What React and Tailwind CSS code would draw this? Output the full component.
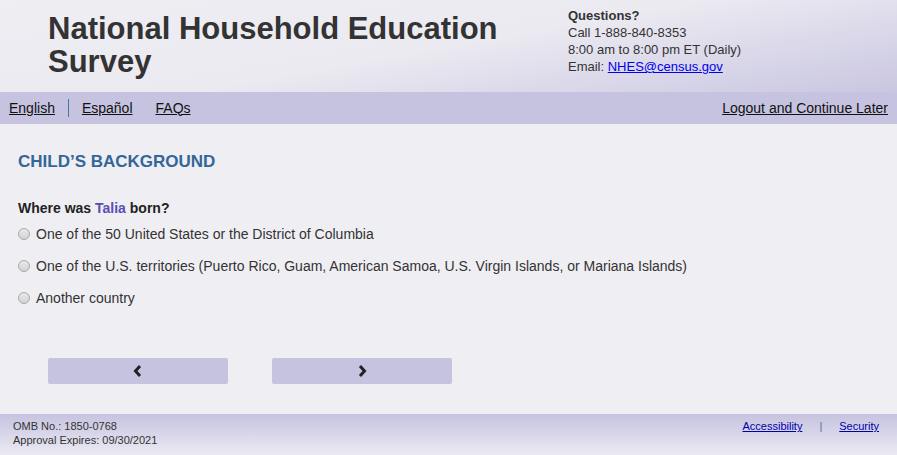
import React from "react";

function Radio({ label }) {
  return (
    <label className="flex h-[32px] items-center gap-[6px]">
      <span className="h-[12px] w-[12px] shrink-0 rounded-full border border-[#a9a9a9] bg-gradient-to-b from-[#e8e8e8] to-[#d4d4d4]" />
      <span>{label}</span>
    </label>
  );
}

export default function App() {
  return (
    <div className="flex min-h-[455px] w-full flex-col bg-[#efeef3] text-[#333] font-['Liberation_Sans',Arial,sans-serif]">
      {/* header */}
      <header className="flex h-[92px] bg-[linear-gradient(170deg,#efeef3_0%,#ebeaf1_50%,#c9c6e1_100%)]">
        <h1 className="w-[520px] pl-[48px] pt-[12px] text-[31px] font-bold leading-[33px] text-[#333]">
          National Household Education Survey
        </h1>
        <div className="pl-[48px] pt-[7px] text-[13px] leading-[17px] text-[#333]">
          <p className="font-bold">Questions?</p>
          <p>Call 1-888-840-8353</p>
          <p>8:00 am to 8:00 pm ET (Daily)</p>
          <p>
            Email: <a className="text-[#0000ee] underline">NHES@census.gov</a>
          </p>
        </div>
      </header>

      {/* nav */}
      <nav className="flex h-[32px] items-center justify-between bg-[#c6c3e0] px-[9px] text-[14px] text-[#111]">
        <div className="flex items-center">
          <a className="underline">English</a>
          <span className="mx-[13px] h-[18px] w-px bg-[#4a6fa5]" />
          <a className="underline">Español</a>
          <a className="ml-[23px] underline">FAQs</a>
        </div>
        <a className="underline">Logout and Continue Later</a>
      </nav>

      {/* main */}
      <main className="flex-1 px-[18px] pt-[28px]">
        <h2 className="text-[17px] font-bold leading-[20px] text-[#336699]">CHILD’S BACKGROUND</h2>
        <p className="mt-[27px] text-[14px] font-bold leading-[18px] text-[#222]">
          Where was <span className="text-[#5b4db3]">Talia</span> born?
        </p>
        <div className="mt-[1px] text-[14px] text-[#333]">
          <Radio label="One of the 50 United States or the District of Columbia" />
          <Radio label="One of the U.S. territories (Puerto Rico, Guam, American Samoa, U.S. Virgin Islands, or Mariana Islands)" />
          <Radio label="Another country" />
        </div>
        <div className="mt-[44px] flex gap-[44px] pl-[30px]">
          <button className="flex h-[26px] w-[180px] items-center justify-center rounded-[2px] bg-[#c6c3e0]">
            <svg width="10" height="12" viewBox="0 0 10 12">
              <path d="M7 1 L2.5 6 L7 11" fill="none" stroke="#222" strokeWidth="3" />
            </svg>
          </button>
          <button className="flex h-[26px] w-[180px] items-center justify-center rounded-[2px] bg-[#c6c3e0]">
            <svg width="10" height="12" viewBox="0 0 10 12">
              <path d="M3 1 L7.5 6 L3 11" fill="none" stroke="#222" strokeWidth="3" />
            </svg>
          </button>
        </div>
      </main>

      {/* footer */}
      <footer className="mt-[30px] flex h-[41px] justify-between bg-gradient-to-b from-[#c6c3e0] to-[#ebeaf2] px-[13px] pt-[5px] text-[11px] leading-[14px] text-[#333]">
        <div>
          <p>OMB No.: 1850-0768</p>
          <p>Approval Expires: 09/30/2021</p>
        </div>
        <div className="flex items-start pr-[5px]">
          <a className="text-[#0000aa] underline">Accessibility</a>
          <span className="mx-[17px] text-[#4a6fa5]">|</span>
          <a className="text-[#0000aa] underline">Security</a>
        </div>
      </footer>
    </div>
  );
}
